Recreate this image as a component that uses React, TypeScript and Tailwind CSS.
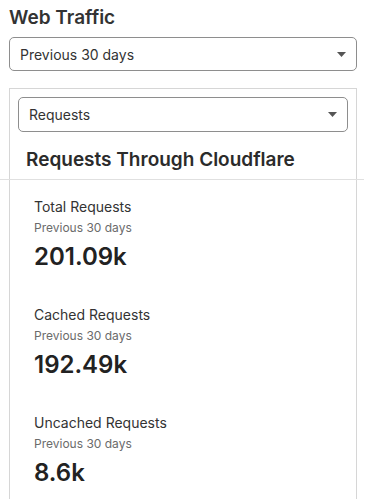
import React from "react";

const Caret: React.FC = () => (
  <svg width="9" height="5" viewBox="0 0 9 5" className="shrink-0">
    <path d="M0 0 L9 0 L4.5 5 Z" fill="#555" />
  </svg>
);

const Select: React.FC<{ label: string; className?: string }> = ({
  label,
  className = "",
}) => (
  <div
    className={`flex items-center justify-between rounded-[5px] border border-[#8e8e8e] bg-white pl-[10px] pr-[10px] text-[14px] text-[#333] ${className}`}
  >
    <span>{label}</span>
    <Caret />
  </div>
);

const metrics = [
  { title: "Total Requests", value: "201.09k" },
  { title: "Cached Requests", value: "192.49k" },
  { title: "Uncached Requests", value: "8.6k" },
];

const Metric: React.FC<{ title: string; value: string }> = ({
  title,
  value,
}) => (
  <div className="h-[108px] pl-4">
    <div className="text-[14px] leading-5 text-[#333]">{title}</div>
    <div className="mt-[3px] text-[12px] leading-4 text-[#6b6b6b]">
      Previous 30 days
    </div>
    <div className="mt-[5px] text-[24px] font-semibold leading-8 text-[#222]">
      {value}
    </div>
  </div>
);

export default function App() {
  return (
    <div
      className="h-[499px] overflow-hidden bg-white px-[9px]"
      style={{ fontFamily: "Inter, 'Noto Sans', sans-serif" }}
    >
      <h1 className="pt-[4px] text-[19px] font-semibold leading-7 text-[#333]">
        Web Traffic
      </h1>
      <Select label="Previous 30 days" className="mt-[5px] h-[34px] w-[348px]" />
      <div className="mt-[17px] w-[348px] border-x border-t border-[#d6d6d6] px-[8px] pt-[8px]">
        <Select label="Requests" className="h-[35px]" />
        <h2 className="mt-[16px] pl-[8px] text-[19px] font-semibold leading-6 text-[#2b2b2b]">
          Requests Through Cloudflare
        </h2>
        <div className="-ml-[19px] -mr-[16px] mt-[7px] h-px bg-[#e0e0e0]" />
        <div className="pt-[17px]">
          {metrics.map((m) => (
            <Metric key={m.title} title={m.title} value={m.value} />
          ))}
        </div>
      </div>
    </div>
  );
}
